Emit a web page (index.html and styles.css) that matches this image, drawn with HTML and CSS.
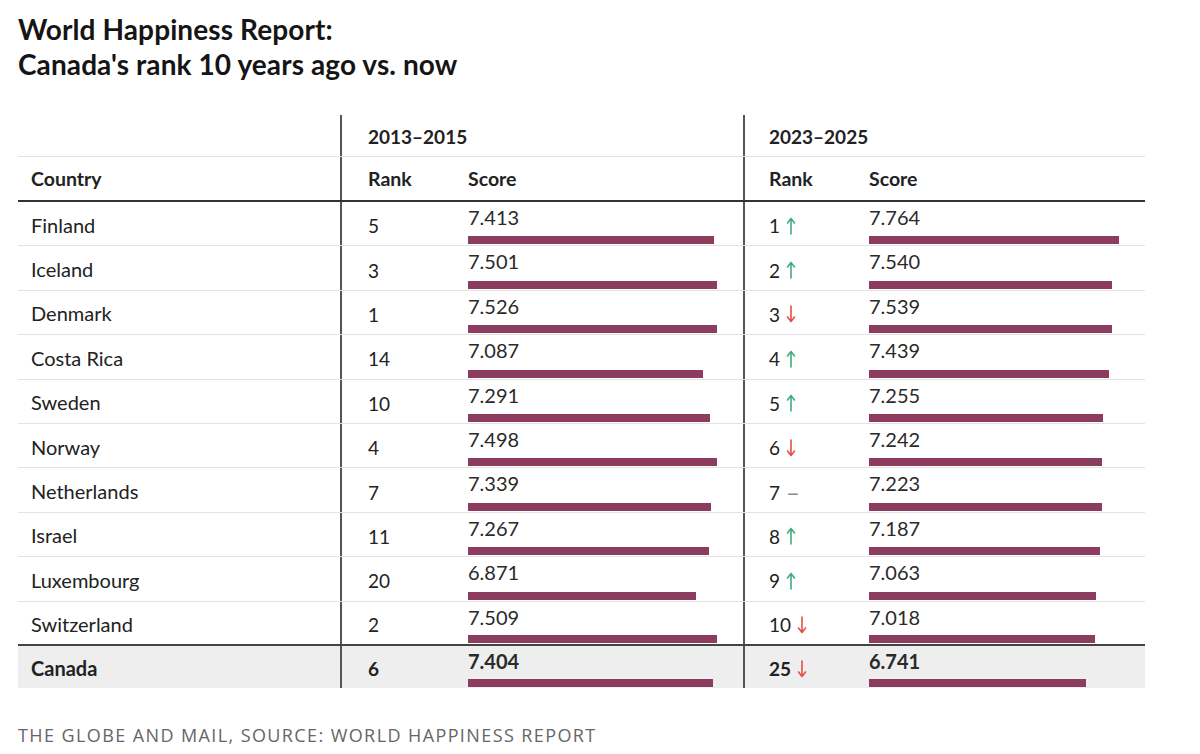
FILE: index.html
```html
<!DOCTYPE html>
<html>
<head>
<meta charset="utf-8">
<link rel="stylesheet" href="styles.css">
</head>
<body>
<div class="page">
  <h1 class="title">World Happiness Report:<br>Canada's rank 10 years ago vs. now</h1>
  <div class="table">
    <div class="row head1">
      <div class="cell country"></div>
      <div class="cell group g1">2013–2015</div>
      <div class="cell group g2">2023–2025</div>
    </div>
    <div class="row head2">
      <div class="cell country">Country</div>
      <div class="cell rank r1">Rank</div>
      <div class="cell score">Score</div>
      <div class="cell rank r2">Rank</div>
      <div class="cell score">Score</div>
    </div>

    <div class="row data">
      <div class="cell country">Finland</div>
      <div class="cell rank r1">5</div>
      <div class="cell score"><span class="num">7.413</span><span class="bar" style="width:246px"></span></div>
      <div class="cell rank r2">1 <svg class="arr up" viewBox="0 0 10 18"><path d="M5 17V2M1.5 6L5 1.5 8.5 6"/></svg></div>
      <div class="cell score"><span class="num">7.764</span><span class="bar" style="width:250px"></span></div>
    </div>
    <div class="row data">
      <div class="cell country">Iceland</div>
      <div class="cell rank r1">3</div>
      <div class="cell score"><span class="num">7.501</span><span class="bar" style="width:249px"></span></div>
      <div class="cell rank r2">2 <svg class="arr up" viewBox="0 0 10 18"><path d="M5 17V2M1.5 6L5 1.5 8.5 6"/></svg></div>
      <div class="cell score"><span class="num">7.540</span><span class="bar" style="width:243px"></span></div>
    </div>
    <div class="row data">
      <div class="cell country">Denmark</div>
      <div class="cell rank r1">1</div>
      <div class="cell score"><span class="num">7.526</span><span class="bar" style="width:249px"></span></div>
      <div class="cell rank r2">3 <svg class="arr down" viewBox="0 0 10 18"><path d="M5 1V16M1.5 12L5 16.5 8.5 12"/></svg></div>
      <div class="cell score"><span class="num">7.539</span><span class="bar" style="width:243px"></span></div>
    </div>
    <div class="row data">
      <div class="cell country">Costa Rica</div>
      <div class="cell rank r1">14</div>
      <div class="cell score"><span class="num">7.087</span><span class="bar" style="width:235px"></span></div>
      <div class="cell rank r2">4 <svg class="arr up" viewBox="0 0 10 18"><path d="M5 17V2M1.5 6L5 1.5 8.5 6"/></svg></div>
      <div class="cell score"><span class="num">7.439</span><span class="bar" style="width:240px"></span></div>
    </div>
    <div class="row data">
      <div class="cell country">Sweden</div>
      <div class="cell rank r1">10</div>
      <div class="cell score"><span class="num">7.291</span><span class="bar" style="width:242px"></span></div>
      <div class="cell rank r2">5 <svg class="arr up" viewBox="0 0 10 18"><path d="M5 17V2M1.5 6L5 1.5 8.5 6"/></svg></div>
      <div class="cell score"><span class="num">7.255</span><span class="bar" style="width:234px"></span></div>
    </div>
    <div class="row data">
      <div class="cell country">Norway</div>
      <div class="cell rank r1">4</div>
      <div class="cell score"><span class="num">7.498</span><span class="bar" style="width:249px"></span></div>
      <div class="cell rank r2">6 <svg class="arr down" viewBox="0 0 10 18"><path d="M5 1V16M1.5 12L5 16.5 8.5 12"/></svg></div>
      <div class="cell score"><span class="num">7.242</span><span class="bar" style="width:233px"></span></div>
    </div>
    <div class="row data">
      <div class="cell country">Netherlands</div>
      <div class="cell rank r1">7</div>
      <div class="cell score"><span class="num">7.339</span><span class="bar" style="width:243px"></span></div>
      <div class="cell rank r2">7 <span class="dash">–</span></div>
      <div class="cell score"><span class="num">7.223</span><span class="bar" style="width:233px"></span></div>
    </div>
    <div class="row data">
      <div class="cell country">Israel</div>
      <div class="cell rank r1">11</div>
      <div class="cell score"><span class="num">7.267</span><span class="bar" style="width:241px"></span></div>
      <div class="cell rank r2">8 <svg class="arr up" viewBox="0 0 10 18"><path d="M5 17V2M1.5 6L5 1.5 8.5 6"/></svg></div>
      <div class="cell score"><span class="num">7.187</span><span class="bar" style="width:231px"></span></div>
    </div>
    <div class="row data">
      <div class="cell country">Luxembourg</div>
      <div class="cell rank r1">20</div>
      <div class="cell score"><span class="num">6.871</span><span class="bar" style="width:228px"></span></div>
      <div class="cell rank r2">9 <svg class="arr up" viewBox="0 0 10 18"><path d="M5 17V2M1.5 6L5 1.5 8.5 6"/></svg></div>
      <div class="cell score"><span class="num">7.063</span><span class="bar" style="width:227px"></span></div>
    </div>
    <div class="row data last">
      <div class="cell country">Switzerland</div>
      <div class="cell rank r1">2</div>
      <div class="cell score"><span class="num">7.509</span><span class="bar" style="width:249px"></span></div>
      <div class="cell rank r2">10 <svg class="arr down" viewBox="0 0 10 18"><path d="M5 1V16M1.5 12L5 16.5 8.5 12"/></svg></div>
      <div class="cell score"><span class="num">7.018</span><span class="bar" style="width:226px"></span></div>
    </div>
    <div class="row data canada">
      <div class="cell country">Canada</div>
      <div class="cell rank r1">6</div>
      <div class="cell score"><span class="num">7.404</span><span class="bar" style="width:245px"></span></div>
      <div class="cell rank r2">25 <svg class="arr down" viewBox="0 0 10 18"><path d="M5 1V16M1.5 12L5 16.5 8.5 12"/></svg></div>
      <div class="cell score"><span class="num">6.741</span><span class="bar" style="width:217px"></span></div>
    </div>
  </div>
  <p class="credit">THE GLOBE AND MAIL, SOURCE: WORLD HAPPINESS REPORT</p>
</div>
</body>
</html>
```
FILE: styles.css
```css
html, body {
  margin: 0;
  padding: 0;
  background: #ffffff;
}
.page {
  padding: 12px 0 0 18px;
  font-family: Lato, "Liberation Sans", sans-serif;
  color: #222;
}
.title {
  margin: 0;
  font-size: 28px;
  line-height: 35px;
  font-weight: 700;
  color: #151515;
  letter-spacing: 0.1px;
}
.table {
  margin-top: 33px;
  width: 1127px;
}
.row {
  display: grid;
  grid-template-columns: 322px 128px 275px 126px 276px;
  box-sizing: border-box;
}
.cell {
  box-sizing: border-box;
  display: flex;
  align-items: center;
}
.country {
  padding-left: 13px;
}
.r1 {
  border-left: 2px solid #555;
  padding-left: 26px;
}
.r2 {
  border-left: 2px solid #555;
  padding-left: 24px;
}
.head1 {
  grid-template-columns: 322px 403px 402px;
  height: 42px;
  border-bottom: 1px solid #e2e2e2;
}
.group {
  border-left: 2px solid #555;
  font-weight: 700;
  font-size: 19px;
  padding-top: 2px;
}
.group.g1 { padding-left: 26px; }
.group.g2 { padding-left: 24px; }
.head2 {
  height: 45px;
  border-bottom: 2px solid #333;
  font-weight: 700;
  font-size: 19.5px;
}
.data {
  height: 44.4px;
  border-bottom: 1px solid #e3e3e3;
  font-size: 20px;
}
.data.last {
  border-bottom: 2px solid #444;
}
.data .rank {
  font-size: 19px;
  padding-top: 4px;
}
.data .country {
  padding-top: 2px;
}
.data .score {
  flex-direction: column;
  align-items: flex-start;
  justify-content: space-between;
  padding: 3px 0 1px 0;
}
.num {
  font-size: 20px;
  line-height: 24px;
  color: #2a2a2a;
}
.bar {
  display: block;
  height: 8px;
  background: #8b3c5f;
}
.arr {
  width: 10px;
  height: 18px;
  margin-left: 6px;
  fill: none;
  stroke-width: 1.6;
  stroke-linecap: round;
  stroke-linejoin: round;
}
.arr.up { stroke: #3fae7c; }
.arr.down { stroke: #e5504a; }
.dash {
  color: #8a8a8a;
  margin-left: 6px;
  font-size: 24px;
  line-height: 1;
}
.canada {
  height: 42px;
  background: #eeeeee;
  border-bottom: none;
  font-weight: 700;
}
.canada .num { font-weight: 700; }
.credit {
  margin: 37px 0 0 0;
  font-family: "Open Sans", "Liberation Sans", sans-serif;
  font-size: 18px;
  line-height: 20px;
  letter-spacing: 1.4px;
  color: #666;
}
```
